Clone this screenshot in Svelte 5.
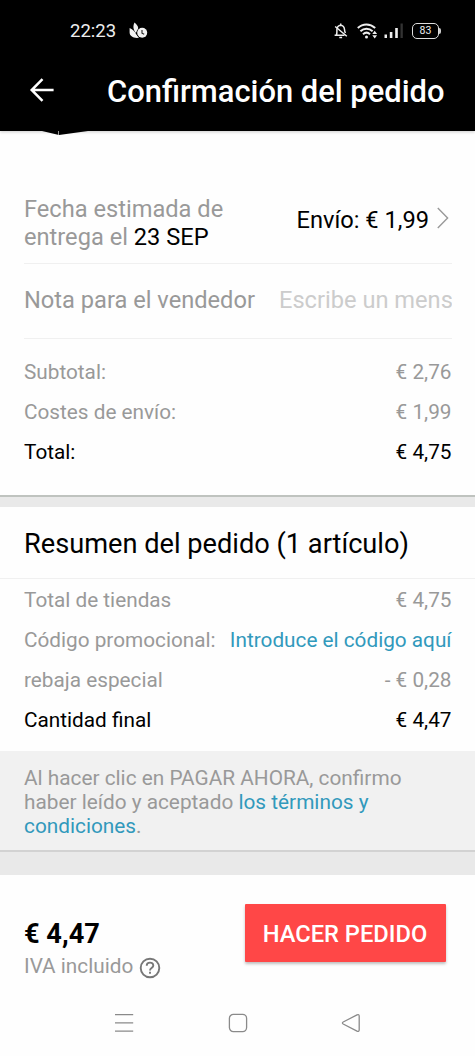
<script>
  let note = $state("");

  const costs = [
    { label: "Subtotal:", value: "€ 2,76" },
    { label: "Costes de envío:", value: "€ 1,99" },
    { label: "Total:", value: "€ 4,75", strong: true },
  ];
</script>

<div class="screen">
  <div class="status-bar">
    <span class="clock">22:23</span>
    <svg class="wellbeing" width="20" height="18" viewBox="0 0 20 18">
      <path d="M5.6 0.5 C8.6 3 9.8 5.5 9 8 L6.8 11 C4.3 8 3.6 4 5.6 0.5 Z" fill="#f2f2f2" />
      <path d="M0.6 6 C4 7.5 6 9.5 7 12 L10 15.8 C4.5 16.6 0.6 14 0.6 10.5 Z" fill="#f2f2f2" />
      <circle cx="13.2" cy="10.8" r="5.7" fill="#000" />
      <circle cx="13.2" cy="10.8" r="5" fill="#f2f2f2" />
      <path d="M13 8 V11.2 L15.2 12.2" fill="none" stroke="#222" stroke-width="1.1" />
    </svg>

    <div class="status-icons">
      <svg width="14" height="16" viewBox="0 0 14 16" fill="none" stroke="#eee" stroke-width="1.5">
        <path d="M0.6 12.2 H10.5 M2.4 12 C3.2 10 2.8 8.5 2.9 6.5 C3.1 4 4.4 2.5 6.7 2.3 C9 2.5 10.3 4 10.5 6.5 C10.6 8 10.9 9 11.4 10" />
        <path d="M6.7 0.4 V2.5 M5.3 14.6 H8.1 M1.2 3.5 L12.8 13.3" />
      </svg>
      <svg class="wifi" width="21" height="16" viewBox="0 0 21 16" fill="none" stroke="#eee" stroke-width="2">
        <path d="M0.8 5 C5.8 0.3 13 0.3 18.2 5" />
        <path d="M3.4 8.2 C7 4.9 12 4.9 15.6 8.2" />
        <path d="M6 11.2 C8.3 9.2 10.8 9.2 13 11.2" />
        <circle cx="9.5" cy="14" r="1.5" fill="#eee" stroke="none" />
        <path d="M15.3 11 L17.7 7.8 L20.1 11 Z M15.3 12.3 L17.7 15.5 L20.1 12.3 Z" fill="#eee" stroke="none" />
      </svg>
      <svg class="signal" width="20" height="16" viewBox="0 0 20 16">
        <rect x="0.5" y="11.5" width="2.5" height="3.5" fill="#eee" />
        <rect x="5.8" y="9" width="2.6" height="6" fill="#eee" />
        <rect x="11.2" y="5" width="2.6" height="10" fill="#eee" />
        <rect x="16.5" y="0.5" width="2.3" height="14.5" fill="#333" />
      </svg>
      <div class="battery">83</div>
    </div>
  </div>

  <header>
    <button class="back" aria-label="Atrás">
      <svg width="26" height="26" viewBox="0 0 26 26" fill="none" stroke="#fff" stroke-width="2.5">
        <path d="M24.6 13 H2.4 M13.5 2.2 L2.7 13 L13.5 23.8" />
      </svg>
    </button>
    <h1>Confirmación del pedido</h1>
    <svg class="notch" width="46" height="5" viewBox="0 0 46 5">
      <path d="M0 0 H46 L17 4 Z" fill="#000" />
      <path d="M16.5 0 V4" stroke="#999" stroke-width="1" />
    </svg>
  </header>

  <section class="shop">
    <div class="shipping">
      <p>Fecha estimada de<br />entrega el <b>23 SEP</b></p>
      <span class="method">Envío: € 1,99</span>
      <svg width="12" height="22" viewBox="0 0 12 22" fill="none" stroke="#999" stroke-width="1.4">
        <path d="M0.8 1 L10.6 11 L0.8 21" />
      </svg>
    </div>

    <div class="note">
      <label for="note">Nota para el vendedor</label>
      <input id="note" placeholder="Escribe un mensaje" bind:value={note} />
    </div>

    <div class="rows costs">
      {#each costs as cost}
        <div class="row" class:strong={cost.strong}>
          <span>{cost.label}</span>
          <span>{cost.value}</span>
        </div>
      {/each}
    </div>
  </section>

  <section class="summary">
    <h2>Resumen del pedido (1 artículo)</h2>
    <div class="rows">
      <div class="row">
        <span>Total de tiendas</span>
        <span>€ 4,75</span>
      </div>
      <div class="row">
        <span>Código promocional:</span>
        <a href="#promo">Introduce el código aquí</a>
      </div>
      <div class="row">
        <span>rebaja especial</span>
        <span>- € 0,28</span>
      </div>
      <div class="row strong">
        <span>Cantidad final</span>
        <span>€ 4,47</span>
      </div>
    </div>
  </section>

  <p class="terms">
    Al hacer clic en PAGAR AHORA, confirmo<br />haber leído y aceptado
    <a href="#terms">los términos y<br />condiciones</a>.
  </p>

  <footer>
    <div class="price">
      <strong>€ 4,47</strong>
      <div class="vat">
        <span>IVA incluido</span>
        <svg width="22" height="22" viewBox="0 0 22 22" fill="none" stroke="#777" stroke-width="1.9">
          <circle cx="11" cy="11" r="9.3" />
          <path d="M7.7 8.8 C7.7 4.6 14.3 4.6 14.3 8.6 C14.3 11 11 11.2 11 13.4" />
          <path d="M11 14.7 V16.7" />
        </svg>
      </div>
    </div>
    <button class="order">HACER PEDIDO</button>
  </footer>

  <nav>
    <svg width="20" height="20" viewBox="0 0 20 20" fill="none" stroke="#8a8a8a" stroke-width="1.3">
      <path d="M1 1.6 H19.2 M1 9.9 H19.2 M1 18.2 H19.2" />
    </svg>
    <svg width="20" height="20" viewBox="0 0 20 20" fill="none" stroke="#8a8a8a" stroke-width="1.3">
      <rect x="1.4" y="1.4" width="17.2" height="17.2" rx="4" />
    </svg>
    <svg width="20" height="20" viewBox="0 0 20 20" fill="none" stroke="#8a8a8a" stroke-width="1.3">
      <path d="M2.2 9 L16 1.9 Q18.2 1 18.2 3.2 V16.8 Q18.2 19 16 18.1 L2.2 11 Q0.6 10 2.2 9 Z" />
    </svg>
  </nav>
</div>

<style>
  :global(body) {
    margin: 0;
    background: #fefefe;
  }

  .screen {
    width: 475px;
    height: 1056px;
    display: flex;
    flex-direction: column;
    overflow: hidden;
    font-family: Roboto, sans-serif;
    font-size: 20.75px;
    color: #999;
    background: #fefefe;
  }

  .screen * {
    box-sizing: border-box;
  }

  h1,
  h2,
  p {
    margin: 0;
    font-weight: 400;
  }

  a {
    color: #3199bc;
    text-decoration: none;
  }

  button {
    border: none;
    padding: 0;
    font-family: inherit;
    cursor: pointer;
  }

  .status-bar {
    height: 60px;
    flex-shrink: 0;
    display: flex;
    align-items: center;
    padding: 1px 36px 0 70px;
    background: #000;
    color: #eee;
  }

  .clock {
    width: 47px;
    font-size: 18.5px;
    white-space: nowrap;
  }

  .wellbeing {
    margin-left: 12px;
  }

  .status-icons {
    display: flex;
    align-items: center;
    margin-left: auto;
  }

  .wifi {
    margin-left: 9px;
  }

  .signal {
    margin-left: 6px;
  }

  .battery {
    position: relative;
    width: 27px;
    height: 16px;
    margin-left: 8px;
    border: 1.5px solid #ddd;
    border-radius: 5px;
    font-size: 10.5px;
    line-height: 14px;
    text-align: center;
  }

  .battery::after {
    content: "";
    position: absolute;
    top: 4px;
    right: -3px;
    width: 2px;
    height: 6px;
    border-radius: 0 2px 2px 0;
    background: #ccc;
  }

  header {
    position: relative;
    height: 71px;
    flex-shrink: 0;
    display: flex;
    align-items: center;
    padding: 0 0 11px 29px;
    background: #000;
    color: #fff;
    box-shadow: 0 1px 3px rgba(0, 0, 0, 0.2);
  }

  .back {
    display: flex;
    background: none;
  }

  h1 {
    margin-left: 52px;
    font-size: 30.9px;
    font-weight: 500;
    line-height: 40px;
    padding-top: 3px;
    white-space: nowrap;
  }

  .notch {
    position: absolute;
    left: 42px;
    top: 71px;
  }

  .shop {
    height: 366px;
    flex-shrink: 0;
    padding: 64px 23px 0 24px;
    border-bottom: 2px solid #bfc3bf;
  }

  .shipping {
    height: 69px;
    display: flex;
    border-bottom: 1px solid #f0f0f0;
    font-size: 23.65px;
    line-height: 28px;
  }

  .shipping b {
    font-weight: 400;
    color: #000;
  }

  .method {
    margin: 11px 8px 0 auto;
    color: #000;
    white-space: nowrap;
  }

  .shipping svg {
    margin: 12px 3px 0 0;
  }

  .note {
    height: 75px;
    display: flex;
    align-items: center;
    border-bottom: 1px solid #f0f0f0;
    font-size: 23.65px;
    padding-bottom: 3px;
  }

  .note label {
    white-space: nowrap;
  }

  .note input {
    flex: 1;
    min-width: 0;
    margin-left: 24px;
    padding: 0;
    border: none;
    outline: none;
    background: none;
    font: inherit;
    color: #000;
  }

  .note input::placeholder {
    color: #ccc;
    opacity: 1;
  }

  .costs {
    padding-top: 13px;
  }

  .row {
    height: 40px;
    display: flex;
    align-items: center;
    justify-content: space-between;
    padding-right: 0.5px;
    white-space: nowrap;
  }

  .strong {
    color: #000;
  }

  .summary {
    flex-shrink: 0;
    height: 254px;
    border-top: 10px solid #e9e9e9;
  }

  .summary h2 {
    height: 72px;
    padding-left: 24px;
    border-bottom: 1px solid #f0f0f0;
    font-size: 27.2px;
    line-height: 74px;
    color: #000;
  }

  .summary .rows {
    padding: 1px 23px 0 24px;
  }

  .terms {
    flex-shrink: 0;
    height: 124px;
    padding: 14.5px 24px 0;
    border-bottom: 23px solid #e9e9e9;
    box-shadow: inset 0 -2px #d2d2d2;
    background: #f1f1f1;
    font-size: 20.8px;
    line-height: 24.2px;
    white-space: nowrap;
  }

  footer {
    flex-shrink: 0;
    height: 115px;
    display: flex;
    justify-content: space-between;
    align-items: flex-start;
    padding: 29px 29.5px 0 24px;
  }

  .price {
    padding-top: 14px;
  }

  .price strong {
    display: block;
    font-size: 27.2px;
    font-weight: 700;
    line-height: 32px;
    color: #000;
  }

  .vat {
    display: flex;
    align-items: center;
    line-height: 32px;
  }

  .vat svg {
    margin: 4px 0 0 6px;
  }

  .order {
    width: 201px;
    height: 58px;
    padding-top: 2px;
    border-radius: 1px;
    background: #ff4747;
    box-shadow: 0 2px 3px rgba(0, 0, 0, 0.25);
    color: #fff;
    font-size: 23.7px;
    font-weight: 500;
    white-space: nowrap;
  }

  nav {
    flex: 1;
    display: flex;
    justify-content: space-between;
    align-items: flex-start;
    padding: 23px 114px 0;
  }
</style>
